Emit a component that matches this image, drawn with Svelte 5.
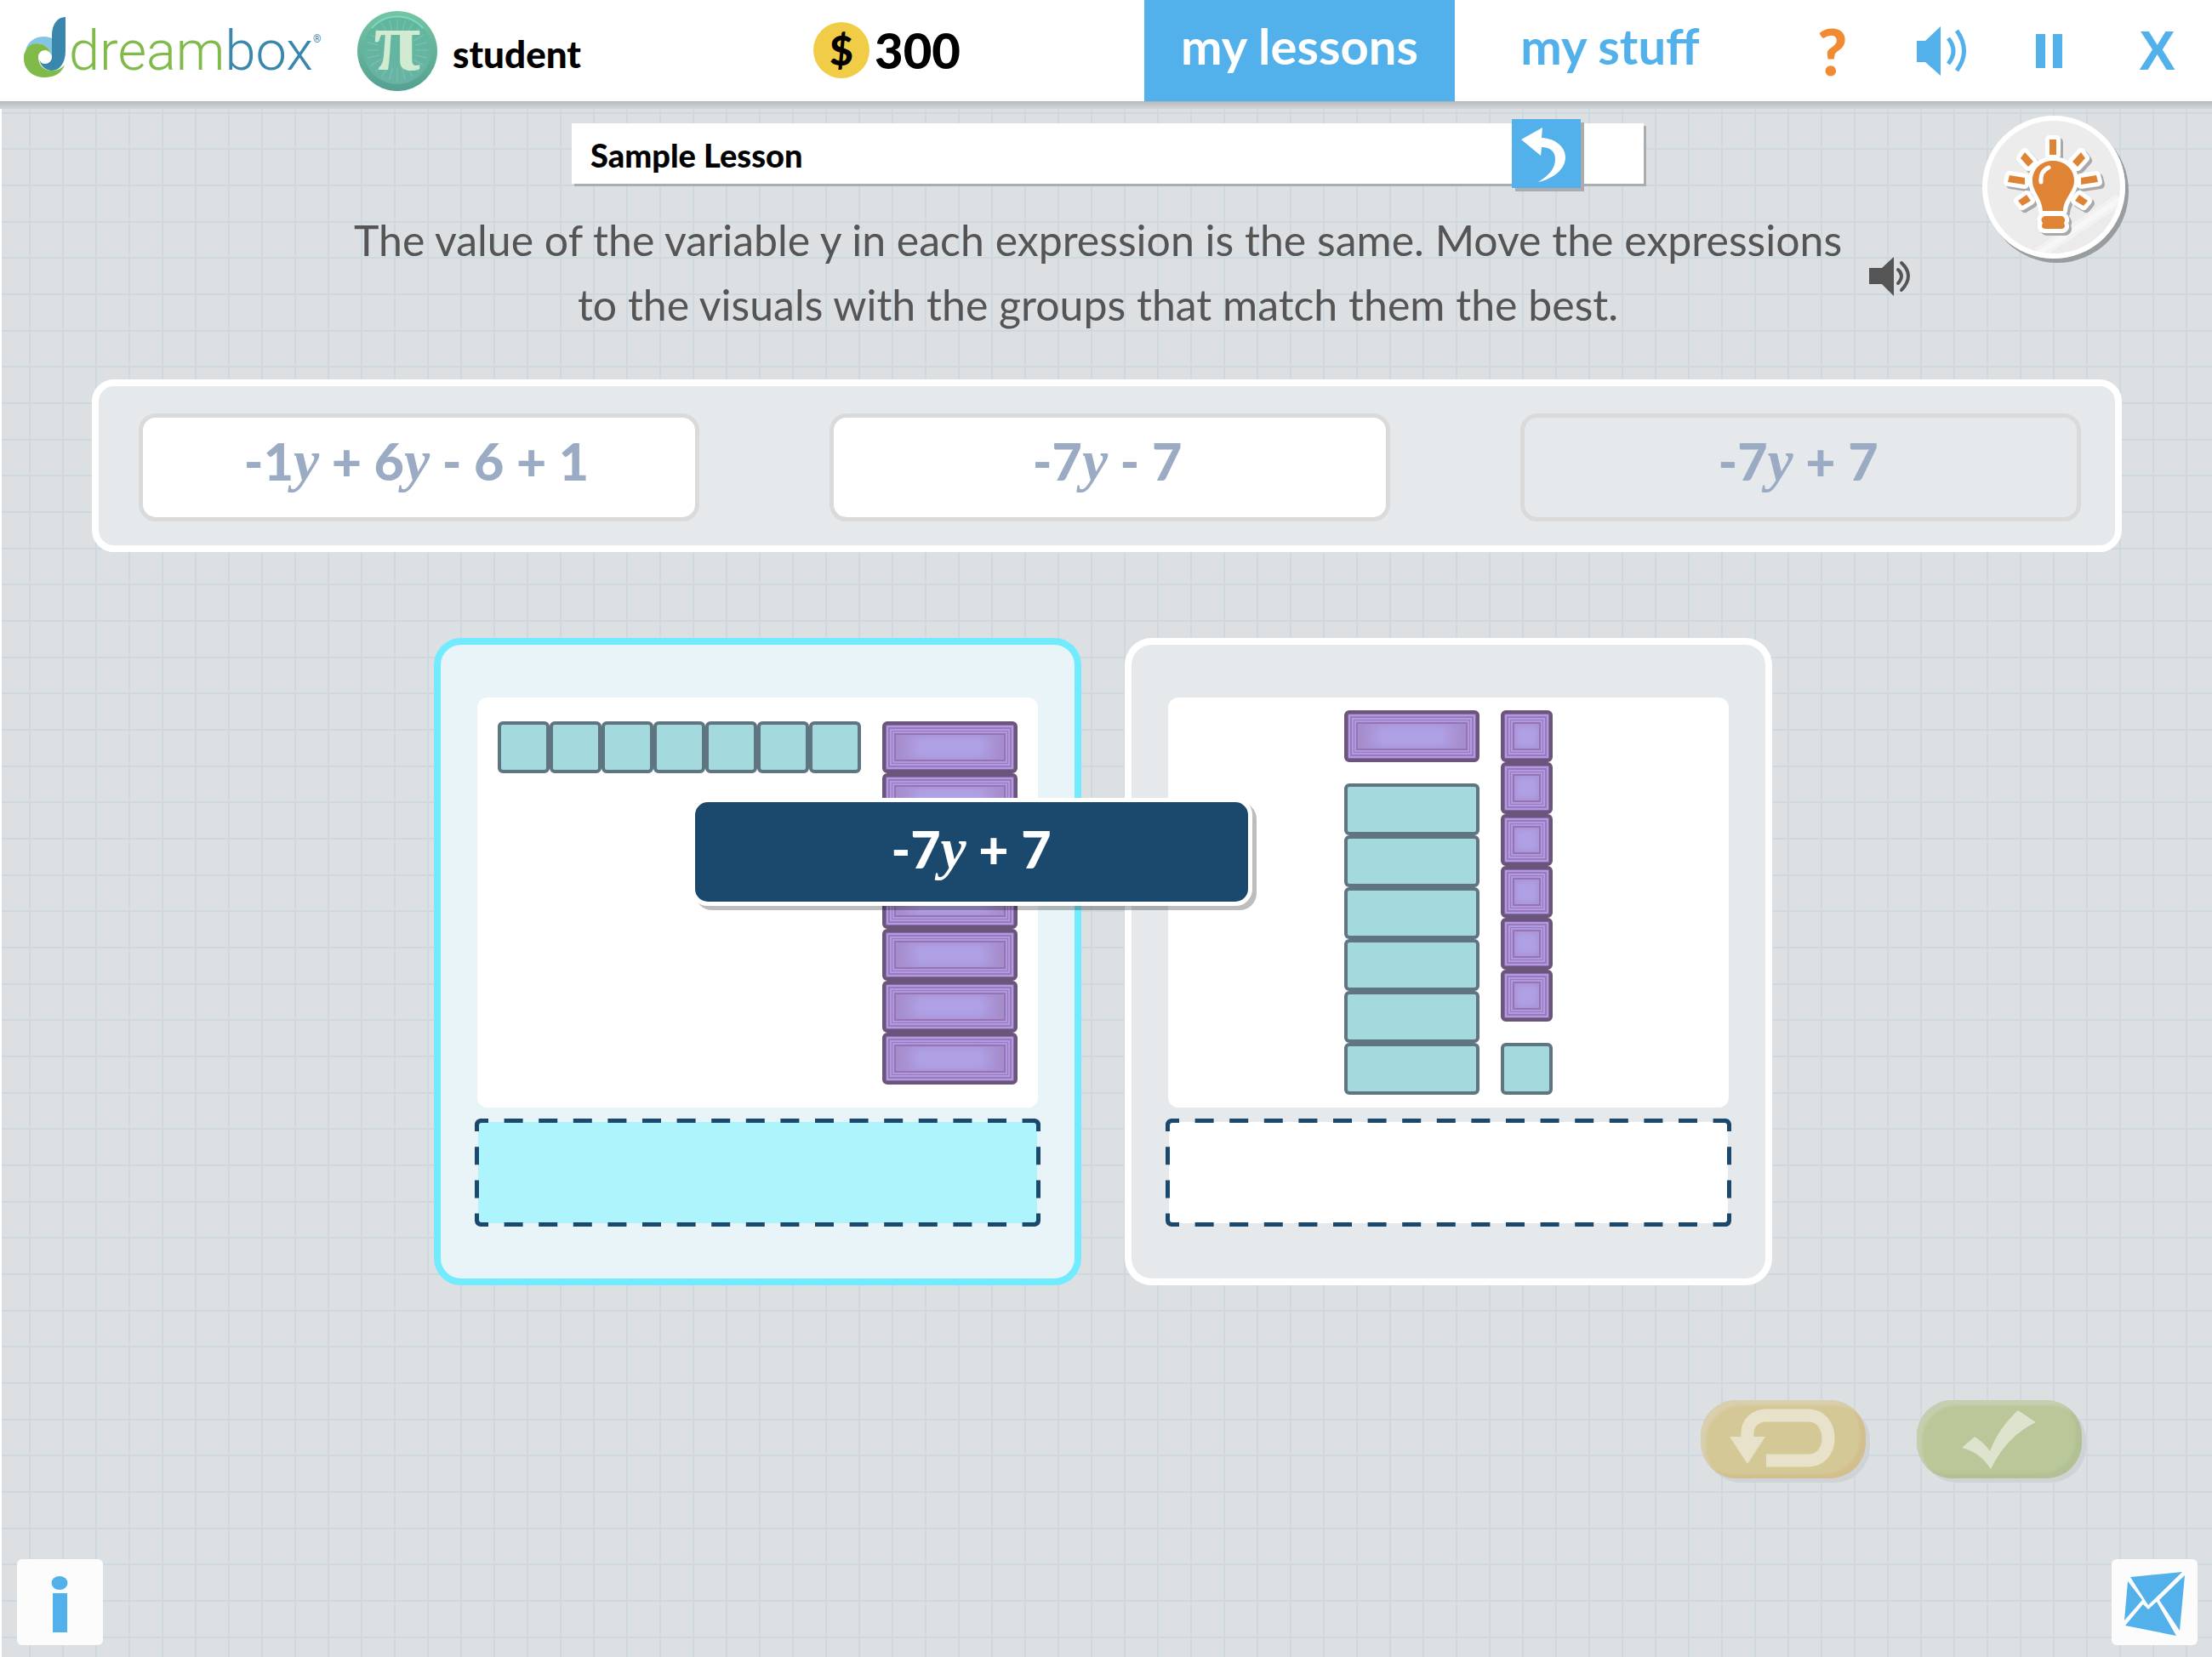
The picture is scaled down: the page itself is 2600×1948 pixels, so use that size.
<script>
  const expressions = [
    { text: '-1y + 6y - 6 + 1', placed: false },
    { text: '-7y - 7', placed: false },
    { text: '-7y + 7', placed: true }
  ];

  const visuals = [
    {
      active: true,
      columns: [
        [{ kind: 'row', shape: 'unit', sign: 'pos', count: 7 }],
        [{ kind: 'stack', shape: 'bar', sign: 'neg', count: 7 }]
      ]
    },
    {
      active: false,
      columns: [
        [
          { kind: 'stack', shape: 'bar', sign: 'neg', count: 1 },
          { kind: 'stack', shape: 'bar', sign: 'pos', count: 6 }
        ],
        [
          { kind: 'stack', shape: 'unit', sign: 'neg', count: 6 },
          { kind: 'stack', shape: 'unit', sign: 'pos', count: 1 }
        ]
      ]
    }
  ];
</script>

{#snippet math(text)}
  <span class="math">{#each text.split('') as ch}{#if ch === 'y'}<i>y</i>{:else}{ch}{/if}{/each}</span>
{/snippet}

<div class="page">
  <header>
    <a class="logo" href="#home" aria-label="dreambox home">
      <svg viewBox="0 0 49 71" aria-hidden="true">
        <path fill="#84c4e4" d="M2 40C4 29 13 23 24 23C28 23 31 24 33 25V46C31 37 24 31 15 31C9 31 5 35 2 40Z" />
        <path fill="#80ba49" d="M1 42C4 34 10 31 15 31C24 31 31 37 33 46C31 41 28 39 25 39C20 39 17 43 17 47C17 57 24 63 33 63C40 63 45 60 48 56C45 66 36 71 24 71C10 71 0 61 0 49C0 46 0 44 1 42Z" />
        <path fill="#3a87ad" d="M49 0V40C49 54 42 63 33 63C26 63 20 58 18 50C20 54 22 55 25 55C30 55 33 51 33 47V22C33 9 39 0 49 0Z" />
      </svg>
      <span class="wordmark">dream<b>box</b><sup>®</sup></span>
    </a>

    <div class="user">
      <svg class="avatar" viewBox="0 0 94 94" aria-hidden="true">
        <defs>
          <linearGradient id="rim" x1="0" y1="0" x2="0" y2="1">
            <stop offset="0" stop-color="#74c5a2" />
            <stop offset="1" stop-color="#54a092" />
          </linearGradient>
          <linearGradient id="face" x1="0" y1="0" x2="0" y2="1">
            <stop offset="0" stop-color="#5fb79b" />
            <stop offset="1" stop-color="#69b3a5" />
          </linearGradient>
        </defs>
        <circle cx="47" cy="47" r="47" fill="url(#rim)" />
        <circle cx="47" cy="46" r="40" fill="url(#face)" />
        <path fill="none" stroke="#7fd6c3" stroke-width="2" d="M17 20A40 40 0 0 1 77 20" />
        <g stroke="#8bc9b8" stroke-width="1" opacity=".7">
          {#each Array(24) as _, n}
            <line x1="47" y1="24" x2="47" y2="10" transform="rotate({n * 15} 47 46)" />
          {/each}
        </g>
        <text x="47" y="69" text-anchor="middle">π</text>
      </svg>
      <span class="name">student</span>
    </div>

    <div class="coins"><span class="coin">$</span><span>300</span></div>

    <nav>
      <a class="tab current" href="#lessons">my lessons</a>
      <a class="tab" href="#stuff">my stuff</a>
    </nav>

    <div class="tools">
      <button class="help" aria-label="Help">?</button>
      <button aria-label="Sound">
        <svg class="sound" viewBox="0 0 58 58" aria-hidden="true">
          <path fill="currentColor" d="M0 17H10L28 0V58L10 42H0Z" />
          <path fill="none" stroke="currentColor" stroke-width="5" d="M37 14Q49 29 37 44M47 5Q64 29 47 52" />
        </svg>
      </button>
      <button aria-label="Pause">
        <svg class="pause" viewBox="0 0 31 40" aria-hidden="true"><path fill="currentColor" d="M0 0H11V40H0ZM20 0H31V40H20Z" /></svg>
      </button>
      <button class="close" aria-label="Close">X</button>
    </div>
  </header>

  <main>
    <div class="top">
      <div class="lesson">
        <h1>Sample Lesson</h1>
        <button class="back" aria-label="Back">
          <svg viewBox="0 0 81 81" aria-hidden="true">
            <path fill="#fff" d="M11 24L36 10L35 22C52 23 63 33 63 45C63 58 50 70 31 74C44 66 51 58 51 47C51 38 45 33 35 33L34 43Z" />
          </svg>
        </button>
      </div>
      <button class="hint" aria-label="Hint">
        <svg viewBox="0 0 168 168" aria-hidden="true">
          <defs>
            <g id="bulb">
              <path d="M79 28H87V46H79Z" />
              <path d="M50 43L45 50L54 60L60 54Z" />
              <path d="M116 43L121 50L112 60L106 54Z" />
              <path d="M32 70L50 73V81L30 78Z" />
              <path d="M134 70L116 73V81L136 78Z" />
              <path d="M52 93L57 100L47 106L42 100Z" />
              <path d="M114 93L109 100L119 106L124 100Z" />
              <path d="M83 53C97 53 108 63 108 76C108 90 96 96 95 112H71C70 96 59 90 59 76C59 63 69 53 83 53Z" />
              <path d="M73 118H94Q99 121 96 126Q99 133 93 133H74Q68 133 71 126Q67 121 73 118Z" />
            </g>
            <clipPath id="disc"><circle cx="84" cy="84" r="79" /></clipPath>
          </defs>
          <circle cx="84" cy="84" r="81" fill="#ececec" stroke="#fff" stroke-width="6" />
          <g clip-path="url(#disc)" stroke="#fff">
            <path stroke-width="14" opacity=".35" d="M66 162L162 98" />
            <path stroke-width="6" opacity=".4" d="M66 162L162 98" />
          </g>
          <use href="#bulb" x="3" y="3" fill="#a9a9a9" stroke="#a9a9a9" stroke-width="10" stroke-linejoin="round" />
          <use href="#bulb" fill="#fff" stroke="#fff" stroke-width="10" stroke-linejoin="round" />
          <use href="#bulb" fill="#df8435" />
          <path fill="none" stroke="#fff" stroke-width="5" stroke-linecap="round" d="M69 78Q68 65 78 61" />
        </svg>
      </button>
      <div class="instructions">
        <p>The value of the variable y in each expression is the same. Move the expressions to the visuals with the groups that match them the best.</p>
        <button class="read" aria-label="Read aloud">
          <svg viewBox="0 0 49 46" aria-hidden="true">
            <path fill="currentColor" d="M0 13H15L29 0V46L15 32H0Z" />
            <path fill="none" stroke="currentColor" stroke-width="4" stroke-linecap="round" d="M34 15Q42 22 34 31M38 7Q54 22 38 39" />
          </svg>
        </button>
      </div>
    </div>

    <section class="tray" aria-label="Expressions">
      {#each expressions as e}
        <button class="tile" class:placed={e.placed}>{@render math(e.text)}</button>
      {/each}
    </section>

    <section class="cards" aria-label="Visuals">
      {#each visuals as v}
        <div class="card" class:active={v.active}>
          <div class="panel">
            {#each v.columns as column}
              <div class="column">
                {#each column as g}
                  <div class="group {g.kind}">
                    {#each Array(g.count) as _}
                      <span class="block {g.shape} {g.sign}"></span>
                    {/each}
                  </div>
                {/each}
              </div>
            {/each}
          </div>
          <svg class="drop" viewBox="0 0 665 127" aria-hidden="true">
            <rect class="fill" x="4" y="4" width="657" height="119" rx="6" />
            <g fill="none" stroke="#1b486d" stroke-width="5">
              <path stroke-dasharray="22 18.6" stroke-dashoffset="12" d="M6 2.5H659M6 124.5H659" />
              <path stroke-dasharray="21 18.2" stroke-dashoffset="12" d="M2.5 6V121M662.5 6V121" />
              <path d="M2.5 8Q2.5 2.5 8 2.5M657 2.5Q662.5 2.5 662.5 8M662.5 119Q662.5 124.5 657 124.5M8 124.5Q2.5 124.5 2.5 119" />
            </g>
          </svg>
        </div>
      {/each}
      <button class="tile dragged">{@render math('-7y + 7')}</button>
    </section>

    <div class="actions">
      <button class="pill undo" aria-label="Undo">
        <svg viewBox="0 0 194 92" aria-hidden="true">
          <path fill="none" stroke="#e9e2ca" stroke-width="15" d="M77 71H127C140 71 150 60 150 45C150 29 140 18 127 18H77C64 18 55 27 55 39V45" />
          <path fill="#e9e2ca" d="M34 43H76L55 75Z" />
        </svg>
      </button>
      <button class="pill done" aria-label="Done">
        <svg viewBox="0 0 194 92" aria-hidden="true">
          <path fill="#dde3cc" d="M53 56L68 43Q78 49 86 60Q96 33 119 12L140 26Q106 42 87 81Q74 61 53 56Z" />
        </svg>
      </button>
    </div>
  </main>

  <footer>
    <button aria-label="Information">
      <svg viewBox="0 0 101 101" aria-hidden="true">
        <ellipse cx="50" cy="28" rx="9.5" ry="8" fill="#52b1ea" />
        <path fill="#52b1ea" d="M42 40H59V86H42Z" />
      </svg>
    </button>
    <button aria-label="Messages">
      <svg viewBox="0 0 101 101" aria-hidden="true">
        <path fill="#52b1ea" d="M22 21L83 15L43 54ZM19 26L36 48L15 72ZM86 19L56 48L80 84ZM16 78L37 53L43 59L53 50L76 90Z" />
      </svg>
    </button>
  </footer>
</div>

<style>
  :global(body) {
    background: #fff;
  }

  .page {
    display: flex;
    flex-direction: column;
    box-sizing: border-box;
    min-height: 100vh;
    border-left: 2px solid #fff;
    font-family: Lato, "Liberation Sans", sans-serif;
    background-color: #dce0e3;
    background-image:
      linear-gradient(90deg, #cdd9df 2px, transparent 2px),
      linear-gradient(#cdd9df 2px, transparent 2px 42px, #cdd9df 42px 44px, transparent 44px 85px, #cdd9df 85px 87px, transparent 87px);
    background-size: 39px 100%, 100% 128px;
    background-position: 32px 0, 0 4px;
  }

  button {
    display: flex;
    align-items: center;
    justify-content: center;
    padding: 0;
    border: 0;
    background: none;
    font: inherit;
    color: inherit;
    cursor: pointer;
  }

  svg {
    display: block;
    overflow: visible;
  }

  a {
    text-decoration: none;
  }

  header {
    display: flex;
    align-items: stretch;
    height: 119px;
    margin-left: -2px;
    background: #fff;
    box-shadow: 0 1px 0 #b2b5b8, 0 3px 0 #bbbfc2, 0 5px 0 #c2c6c9, 0 7px 0 #c9cdd0, 0 9px 0 #cfd3d6;
  }

  .logo {
    display: flex;
    flex: none;
    align-items: flex-start;
    width: 392px;
    padding: 20px 0 0 28px;
    box-sizing: border-box;
  }

  .logo svg {
    width: 49px;
    height: 71px;
  }

  .wordmark {
    margin-left: 4px;
    font: 300 65px/80px Roboto, sans-serif;
    color: #80ba49;
  }

  .wordmark b {
    font-weight: 300;
    color: #3a87ad;
  }

  .wordmark sup {
    font-size: 12px;
    font-weight: 500;
    line-height: 12px;
    vertical-align: 32px;
    color: #3a87ad;
  }

  .user {
    display: flex;
    flex: none;
    align-items: center;
    gap: 18px;
    width: 536px;
    padding-left: 28px;
    box-sizing: border-box;
  }

  .avatar {
    width: 94px;
    height: 94px;
  }

  .avatar text {
    font: bold 100px "Liberation Serif", serif;
    fill: #d0ebd2;
  }

  .name {
    padding-top: 6px;
    font-size: 44px;
    font-weight: 900;
  }

  .coins {
    display: flex;
    flex: none;
    align-items: center;
    gap: 6px;
    width: 417px;
    padding: 0 0 2px 28px;
    box-sizing: border-box;
    font-size: 58px;
    font-weight: 900;
  }

  .coin {
    display: grid;
    place-items: center;
    width: 66px;
    height: 66px;
    border-radius: 50%;
    background: #f1cd47;
    font-size: 48px;
  }

  nav {
    display: flex;
    flex: none;
  }

  .tab {
    display: flex;
    align-items: center;
    justify-content: center;
    width: 365px;
    padding-bottom: 12px;
    box-sizing: border-box;
    font-size: 58px;
    font-weight: 700;
    color: #52b1ea;
  }

  .tab.current {
    background: #52b1ea;
    color: #fff;
  }

  .tools {
    display: flex;
    flex: 1;
    align-items: center;
    justify-content: flex-end;
    gap: 82px;
    padding-right: 43px;
    color: #52b1ea;
  }

  .help {
    font-size: 76px;
    font-weight: 900;
    color: #f08a33;
  }

  .close {
    margin-left: 8px;
    font: bold 64px "Liberation Sans", sans-serif;
  }

  .pause {
    width: 31px;
    height: 40px;
  }

  .sound {
    width: 58px;
    height: 58px;
  }

  main {
    display: flex;
    flex-direction: column;
  }

  .top {
    display: grid;
    grid-template-columns: 1fr 1260px 1fr;
    padding: 26px 102px 0 104px;
  }

  .lesson {
    display: flex;
    grid-column: 2;
    align-items: center;
    justify-content: space-between;
    height: 71px;
    padding: 0 74px 0 22px;
    background: #fff;
    box-shadow: 3px 3px 0 #a9adb0;
  }

  .lesson h1 {
    margin: 0;
    padding-top: 2px;
    font-size: 38px;
    font-weight: 900;
  }

  .back {
    width: 81px;
    height: 81px;
    background: #52b1ea;
    box-shadow: 4px 4px 0 #a9adb0;
  }

  .back svg {
    width: 81px;
  }

  .hint {
    grid-column: 3;
    justify-self: end;
    width: 168px;
    height: 168px;
    margin: -9px 0 -88px;
    border-radius: 50%;
    box-shadow: 4px 5px 0 #999da0;
  }

  .hint svg {
    width: 168px;
  }

  .instructions {
    display: flex;
    grid-column: 1 / -1;
    align-items: center;
    justify-content: center;
    gap: 16px;
    padding: 28px 0 0 42px;
    color: #555;
  }

  .instructions p {
    max-width: 1780px;
    margin: 0;
    font-size: 50px;
    line-height: 76px;
    text-align: center;
  }

  .read {
    padding-top: 10px;
  }

  .read svg {
    width: 49px;
    height: 46px;
  }

  .tray {
    display: flex;
    justify-content: space-between;
    margin: 50px 106px 0;
    padding: 32px 40px 28px 47px;
    border: 8px solid #fff;
    border-radius: 26px;
    background: #e5e9eb;
  }

  .tile {
    flex: 0 1 659px;
    height: 127px;
    padding: 0 6px 16px 0;
    box-sizing: border-box;
    border: 5px solid #dadada;
    border-radius: 20px;
    background: #fff;
    color: #9aabc3;
  }

  .tile.placed {
    background: none;
  }

  .math {
    font-size: 61px;
    font-weight: 900;
    line-height: 72px;
    white-space: pre;
  }

  .math i {
    font-family: "Liberation Serif", serif;
    font-size: 68px;
    font-weight: 700;
    line-height: 60px;
  }

  .cards {
    position: relative;
    display: flex;
    align-self: center;
    gap: 51px;
    margin: 101px 10px 0 0;
  }

  .card {
    width: 761px;
    padding: 62px 40px 61px;
    box-sizing: border-box;
    border: 8px solid #fff;
    border-radius: 32px;
    background: #e5e9eb;
  }

  .card.active {
    border-color: #73ebfe;
    background: #e8f4f7;
  }

  .panel {
    display: flex;
    align-items: center;
    justify-content: center;
    gap: 25px;
    height: 482px;
    margin: 0 3px;
    border-radius: 12px;
    background: #fff;
  }

  .column {
    display: flex;
    flex-direction: column;
    align-self: stretch;
    justify-content: center;
    gap: 25px;
  }

  .active .column {
    align-self: center;
    height: 427px;
    justify-content: flex-start;
  }

  .group {
    display: flex;
  }

  .group.stack {
    flex-direction: column;
  }

  .block {
    width: 61px;
    height: 61px;
    box-sizing: border-box;
    border: 4px solid #5f7581;
    border-radius: 6px;
    background: #a4d9de;
  }

  .block.bar {
    width: 159px;
  }

  .block.neg {
    border-color: #6c557b;
    background: #b0a1e6;
    box-shadow:
      inset 0 0 0 1px #8a68a3,
      inset 0 0 0 3px #b09ce4,
      inset 0 0 0 5px #9b79b8,
      inset 0 0 0 7px #b09ce4,
      inset 0 0 0 8px #9b79b8,
      inset 0 0 0 10px #ae99e0,
      inset 0 0 0 12px #9773b3,
      inset 0 0 8px 13px #a78fcf;
  }

  .block.bar.neg {
    background: linear-gradient(90deg, #a58cca 14px, #b0a1e6 42px, #b0a1e6 109px, #a58cca 137px);
  }

  .drop {
    width: 100%;
    margin-top: 13px;
  }

  .drop .fill {
    fill: #fff;
  }

  .active .drop .fill {
    fill: #aef4fd;
  }

  .tile.dragged {
    position: absolute;
    top: 188px;
    left: 302px;
    width: 660px;
    padding: 0 0 8px;
    border-color: #fff;
    background: #1b486d;
    color: #fff;
    box-shadow: 5px 5px 0 rgba(0, 0, 0, 0.26);
  }

  .actions {
    display: flex;
    justify-content: flex-end;
    gap: 60px;
    margin: 135px 153px 0 0;
  }

  .pill {
    width: 194px;
    height: 92px;
    border-radius: 42px;
  }

  .pill svg {
    width: 194px;
  }

  .undo {
    background: #d5c897;
    box-shadow: inset 6px 6px 3px #d9cfae, inset -7px -5px 3px #d3bf8e, 5px 5px 0 #d0d3d6;
  }

  .done {
    background: #bac798;
    box-shadow: inset 6px 6px 3px #c5cfb0, inset -7px -5px 3px #b2c095, 5px 5px 0 #d0d3d6;
  }

  footer {
    display: flex;
    justify-content: space-between;
    margin-top: auto;
    padding: 0 17px 14px 18px;
  }

  footer button {
    width: 101px;
    height: 101px;
    border-radius: 6px;
    background: #fcfcfc;
  }

  footer svg {
    width: 101px;
  }
</style>
